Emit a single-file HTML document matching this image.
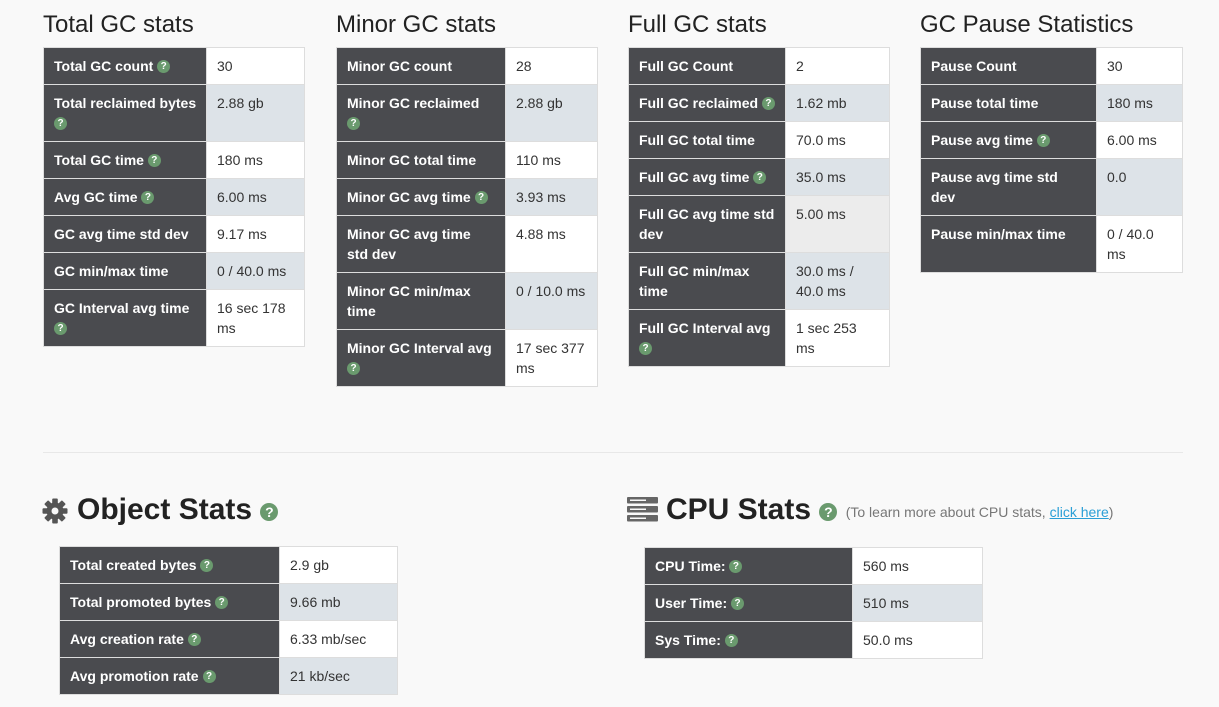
<!DOCTYPE html>
<html><head><meta charset="utf-8">
<style>
*{box-sizing:border-box;margin:0;padding:0}
body{width:1219px;height:707px;background:#f9f9f9;font-family:"Liberation Sans",Arial,sans-serif;color:#333;position:relative;overflow:hidden}
h2{position:absolute;top:11px;font-weight:normal;font-size:24px;color:#222;line-height:28px}
table{position:absolute;border-collapse:collapse;font-size:14px;line-height:20px;table-layout:fixed}
td{border:1px solid #ddd;padding:8px 10px;vertical-align:top}
td.l{background:#4a4b4f;color:#fff;font-weight:bold;padding-right:4px}
td.v{background:#fff}
tr:nth-child(even) td.v{background:#dde3e8}
td.v.alt{background:#ececec!important}
.q{display:inline-block;overflow:hidden;width:13px;height:13px;border-radius:50%;background:#6a9a6e;color:#fff;font-size:10px;line-height:13px;text-align:center;font-weight:bold;vertical-align:-2px}
.big{position:absolute;font-size:30px;font-weight:bold;color:#222;line-height:34px}
.q2{display:inline-block;overflow:hidden;width:18px;height:18px;border-radius:50%;background:#6a9a6e;color:#fff;font-size:14px;line-height:18px;text-align:center;font-weight:bold;vertical-align:-2px}
</style></head><body>
<h2 style="left:43px">Total GC stats</h2>
<h2 style="left:336px">Minor GC stats</h2>
<h2 style="left:628px">Full GC stats</h2>
<h2 style="left:920px">GC Pause Statistics</h2>

<table style="left:43px;top:47px;width:262px"><colgroup><col style="width:163px"><col></colgroup>
<tr><td class="l">Total GC count <span class="q">?</span></td><td class="v">30</td></tr>
<tr><td class="l">Total reclaimed bytes<br><span class="q">?</span></td><td class="v">2.88 gb</td></tr>
<tr><td class="l">Total GC time <span class="q">?</span></td><td class="v">180 ms</td></tr>
<tr><td class="l">Avg GC time <span class="q">?</span></td><td class="v">6.00 ms</td></tr>
<tr><td class="l">GC avg time std dev</td><td class="v">9.17 ms</td></tr>
<tr><td class="l">GC min/max time</td><td class="v">0 / 40.0 ms</td></tr>
<tr><td class="l">GC Interval avg time<br><span class="q">?</span></td><td class="v">16 sec 178 ms</td></tr>
</table>

<table style="left:336px;top:47px;width:262px"><colgroup><col style="width:169px"><col></colgroup>
<tr><td class="l">Minor GC count</td><td class="v">28</td></tr>
<tr><td class="l">Minor GC reclaimed<br><span class="q">?</span></td><td class="v">2.88 gb</td></tr>
<tr><td class="l">Minor GC total time</td><td class="v">110 ms</td></tr>
<tr><td class="l">Minor GC avg time <span class="q">?</span></td><td class="v">3.93 ms</td></tr>
<tr><td class="l">Minor GC avg time<br>std dev</td><td class="v">4.88 ms</td></tr>
<tr><td class="l">Minor GC min/max<br>time</td><td class="v">0 / 10.0 ms</td></tr>
<tr><td class="l">Minor GC Interval avg<br><span class="q">?</span></td><td class="v">17 sec 377 ms</td></tr>
</table>

<table style="left:628px;top:47px;width:262px"><colgroup><col style="width:157px"><col></colgroup>
<tr><td class="l">Full GC Count</td><td class="v">2</td></tr>
<tr><td class="l">Full GC reclaimed <span class="q">?</span></td><td class="v">1.62 mb</td></tr>
<tr><td class="l">Full GC total time</td><td class="v">70.0 ms</td></tr>
<tr><td class="l">Full GC avg time <span class="q">?</span></td><td class="v">35.0 ms</td></tr>
<tr><td class="l">Full GC avg time std<br>dev</td><td class="v alt">5.00 ms</td></tr>
<tr><td class="l">Full GC min/max<br>time</td><td class="v">30.0 ms /<br>40.0 ms</td></tr>
<tr><td class="l">Full GC Interval avg<br><span class="q">?</span></td><td class="v">1 sec 253 ms</td></tr>
</table>

<table style="left:920px;top:47px;width:263px"><colgroup><col style="width:176px"><col></colgroup>
<tr><td class="l">Pause Count</td><td class="v">30</td></tr>
<tr><td class="l">Pause total time</td><td class="v">180 ms</td></tr>
<tr><td class="l">Pause avg time <span class="q">?</span></td><td class="v">6.00 ms</td></tr>
<tr><td class="l">Pause avg time std<br>dev</td><td class="v">0.0</td></tr>
<tr><td class="l">Pause min/max time</td><td class="v">0 / 40.0<br>ms</td></tr>
</table>

<div style="position:absolute;left:43px;top:452px;width:1140px;height:1px;background:#e8e8e8"></div>

<svg style="position:absolute;left:42px;top:498px" width="26" height="26" viewBox="0 0 26 26"><g fill="#555"><circle cx="13" cy="13" r="8.5"/><g transform="translate(13 13)"><rect x="-2.8" y="-12.5" width="5.6" height="25" rx="1"/><rect x="-2.8" y="-12.5" width="5.6" height="25" rx="1" transform="rotate(45)"/><rect x="-2.8" y="-12.5" width="5.6" height="25" rx="1" transform="rotate(90)"/><rect x="-2.8" y="-12.5" width="5.6" height="25" rx="1" transform="rotate(135)"/></g></g><circle cx="13" cy="13" r="3.5" fill="#f9f9f9"/></svg>
<div class="big" style="left:77px;top:493px">Object Stats <span class="q2">?</span></div>

<svg style="position:absolute;left:627px;top:497px" width="31" height="25" viewBox="0 0 31 25"><g fill="#666"><rect x="0" y="0" width="31" height="6.5" rx="1"/><rect x="0" y="9" width="31" height="6.5" rx="1"/><rect x="0" y="18" width="31" height="6.5" rx="1"/></g><g fill="#f9f9f9"><rect x="3" y="2.5" width="16" height="1.5"/><rect x="3" y="11.5" width="16" height="1.5"/><rect x="3" y="20.5" width="16" height="1.5"/></g></svg>
<div class="big" style="left:666px;top:493px">CPU Stats <span class="q2">?</span> <span style="font-size:14px;font-weight:normal;color:#777;vertical-align:2px">(To learn more about CPU stats, <span style="color:#2a9fd6;text-decoration:underline">click here</span>)</span></div>

<table style="left:59px;top:546px;width:339px"><colgroup><col style="width:220px"><col></colgroup>
<tr><td class="l">Total created bytes <span class="q">?</span></td><td class="v">2.9 gb</td></tr>
<tr><td class="l">Total promoted bytes <span class="q">?</span></td><td class="v">9.66 mb</td></tr>
<tr><td class="l">Avg creation rate <span class="q">?</span></td><td class="v">6.33 mb/sec</td></tr>
<tr><td class="l">Avg promotion rate <span class="q">?</span></td><td class="v">21 kb/sec</td></tr>
</table>

<table style="left:644px;top:547px;width:339px"><colgroup><col style="width:208px"><col></colgroup>
<tr><td class="l">CPU Time: <span class="q">?</span></td><td class="v">560 ms</td></tr>
<tr><td class="l">User Time: <span class="q">?</span></td><td class="v">510 ms</td></tr>
<tr><td class="l">Sys Time: <span class="q">?</span></td><td class="v">50.0 ms</td></tr>
</table>
</body></html>
